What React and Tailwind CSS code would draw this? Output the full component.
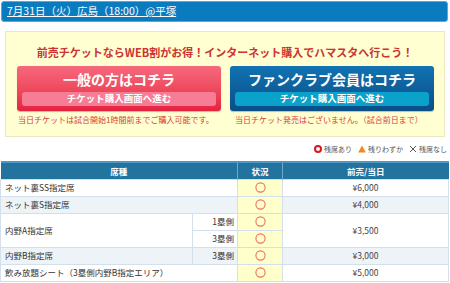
import React from "react";

const F = { fontFamily: '"Noto Sans CJK JP", "Noto Sans", sans-serif' };

function Circle() {
  return (
    <svg width="11" height="11" viewBox="0 0 11 11" className="mx-auto block">
      <circle cx="5.5" cy="5.5" r="4.6" fill="none" stroke="#e8735e" strokeWidth="1.1" />
    </svg>
  );
}

export default function App() {
  return (
    <div className="w-[450px] h-[283px] bg-white overflow-hidden text-[#333]" style={F}>
      {/* header */}
      <div className="mx-[1px] mt-[1px] h-[21px] w-[447px] rounded-[3px] border border-[#5aa9dc] bg-[#0b7bbf] flex items-center pl-[5px]">
        <span className="text-white text-[10.5px] underline leading-none">7月31日（火）広島（18:00）@平塚</span>
      </div>

      {/* yellow box */}
      <div className="ml-[5px] mt-[9px] w-[440px] h-[106px] border border-[#ebe6c6] bg-[#ffffd2] flex flex-col items-center">
        <div className="mt-[13px] text-[11px] font-bold text-[#cc3333] leading-[14px]">
          前売チケットならWEB割がお得！インターネット購入でハマスタへ行こう！
        </div>
        <div className="mt-[7px] w-full pl-[11px] pr-[10px] flex gap-[9px]">
          <div className="w-[204px] flex flex-col">
            <div className="h-[45px] rounded-[3px] bg-gradient-to-b from-[#f7687d] to-[#e5213f] flex flex-col items-center px-[5px] pb-[5px] shadow-[0_1px_1px_rgba(0,0,0,0.25)]">
              <div className="h-[26px] flex items-center text-white font-bold text-[14px] leading-none">一般の方はコチラ</div>
              <div className="w-full h-[14px] rounded-[3px] bg-[#f77c95] flex items-center justify-center text-white font-bold text-[9.5px] leading-none">チケット購入画面へ進む</div>
            </div>
            <div className="mt-[4px] pl-[1px] text-[8px] text-[#d5403a] leading-[10px]">当日チケットは試合開始1時間前までご購入可能です。</div>
          </div>
          <div className="w-[204px] flex flex-col">
            <div className="h-[45px] rounded-[3px] bg-gradient-to-b from-[#1173b3] to-[#0a4e86] flex flex-col items-center px-[5px] pb-[5px] shadow-[0_1px_1px_rgba(0,0,0,0.25)]">
              <div className="h-[26px] flex items-center text-white font-bold text-[14px] leading-none">ファンクラブ会員はコチラ</div>
              <div className="w-full h-[14px] rounded-[3px] bg-[#0aa2cb] flex items-center justify-center text-white font-bold text-[9.5px] leading-none">チケット購入画面へ進む</div>
            </div>
            <div className="mt-[4px] pl-[5px] text-[8px] text-[#d5403a] leading-[10px]">当日チケット発売はございません。（試合前日まで）</div>
          </div>
        </div>
      </div>

      {/* legend */}
      <div className="mt-[6px] h-[12px] pr-[3px] flex justify-end items-center gap-[6px] text-[7px] text-[#555] leading-none">
        <span className="flex items-center gap-[2px]">
          <svg width="8" height="8" viewBox="0 0 8 8"><circle cx="4" cy="4" r="3" fill="none" stroke="#d9171e" strokeWidth="2" /></svg>
          残席あり
        </span>
        <span className="flex items-center gap-[2px]">
          <svg width="8" height="8" viewBox="0 0 8 8"><polygon points="4,0.5 7.8,7.5 0.2,7.5" fill="#f08a1c" /></svg>
          残りわずか
        </span>
        <span className="flex items-center gap-[2px]">
          <svg width="8" height="8" viewBox="0 0 8 8"><path d="M1 1 L7 7 M7 1 L1 7" stroke="#444" strokeWidth="0.9" /></svg>
          残席なし
        </span>
      </div>

      {/* table */}
      <table className="mt-[6px] w-[448px] border-collapse table-fixed text-[8.5px] leading-none">
        <colgroup>
          <col className="w-[192px]" />
          <col className="w-[45px]" />
          <col className="w-[45px]" />
          <col className="w-[166px]" />
        </colgroup>
        <thead>
          <tr className="h-[17px] bg-[#22749f] text-white">
            <th colSpan={2} className="font-bold text-[8.5px] border-t-2 border-t-[#4d98c4] border-r border-r-[#6fa9cc]">席種</th>
            <th className="font-bold text-[8.5px] border-t-2 border-t-[#4d98c4] border-r border-r-[#6fa9cc]">状況</th>
            <th className="font-bold text-[8.5px] border-t-2 border-t-[#4d98c4]">前売/当日</th>
          </tr>
        </thead>
        <tbody>
          <tr className="h-[17px] bg-white">
            <td colSpan={2} className="pl-[4px] border border-[#d3dfea]">ネット裏SS指定席</td>
            <td className="bg-[#ffffcc] border border-[#d3dfea]"><Circle /></td>
            <td className="text-center text-[#444] border border-[#d3dfea]">¥6,000</td>
          </tr>
          <tr className="h-[17px] bg-[#eef3f8]">
            <td colSpan={2} className="pl-[4px] border border-[#d3dfea]">ネット裏S指定席</td>
            <td className="bg-[#ffffcc] border border-[#d3dfea]"><Circle /></td>
            <td className="text-center text-[#444] border border-[#d3dfea]">¥4,000</td>
          </tr>
          <tr className="h-[17px] bg-white">
            <td rowSpan={2} className="pl-[4px] border border-[#d3dfea]">内野A指定席</td>
            <td className="text-right pr-[3px] border border-[#d3dfea]">1塁側</td>
            <td className="bg-[#ffffcc] border border-[#d3dfea]"><Circle /></td>
            <td rowSpan={2} className="text-center text-[#444] border border-[#d3dfea]">¥3,500</td>
          </tr>
          <tr className="h-[17px] bg-white">
            <td className="text-right pr-[3px] border border-[#d3dfea]">3塁側</td>
            <td className="bg-[#ffffcc] border border-[#d3dfea]"><Circle /></td>
          </tr>
          <tr className="h-[17px] bg-[#eef3f8]">
            <td className="pl-[4px] border border-[#d3dfea]">内野B指定席</td>
            <td className="text-right pr-[3px] border border-[#d3dfea]">3塁側</td>
            <td className="bg-[#ffffcc] border border-[#d3dfea]"><Circle /></td>
            <td className="text-center text-[#444] border border-[#d3dfea]">¥3,000</td>
          </tr>
          <tr className="h-[17px] bg-white">
            <td colSpan={2} className="pl-[4px] border border-[#d3dfea]">飲み放題シート（3塁側内野B指定エリア）</td>
            <td className="bg-[#ffffcc] border border-[#d3dfea]"><Circle /></td>
            <td className="text-center text-[#444] border border-[#d3dfea]">¥5,000</td>
          </tr>
        </tbody>
      </table>
    </div>
  );
}
